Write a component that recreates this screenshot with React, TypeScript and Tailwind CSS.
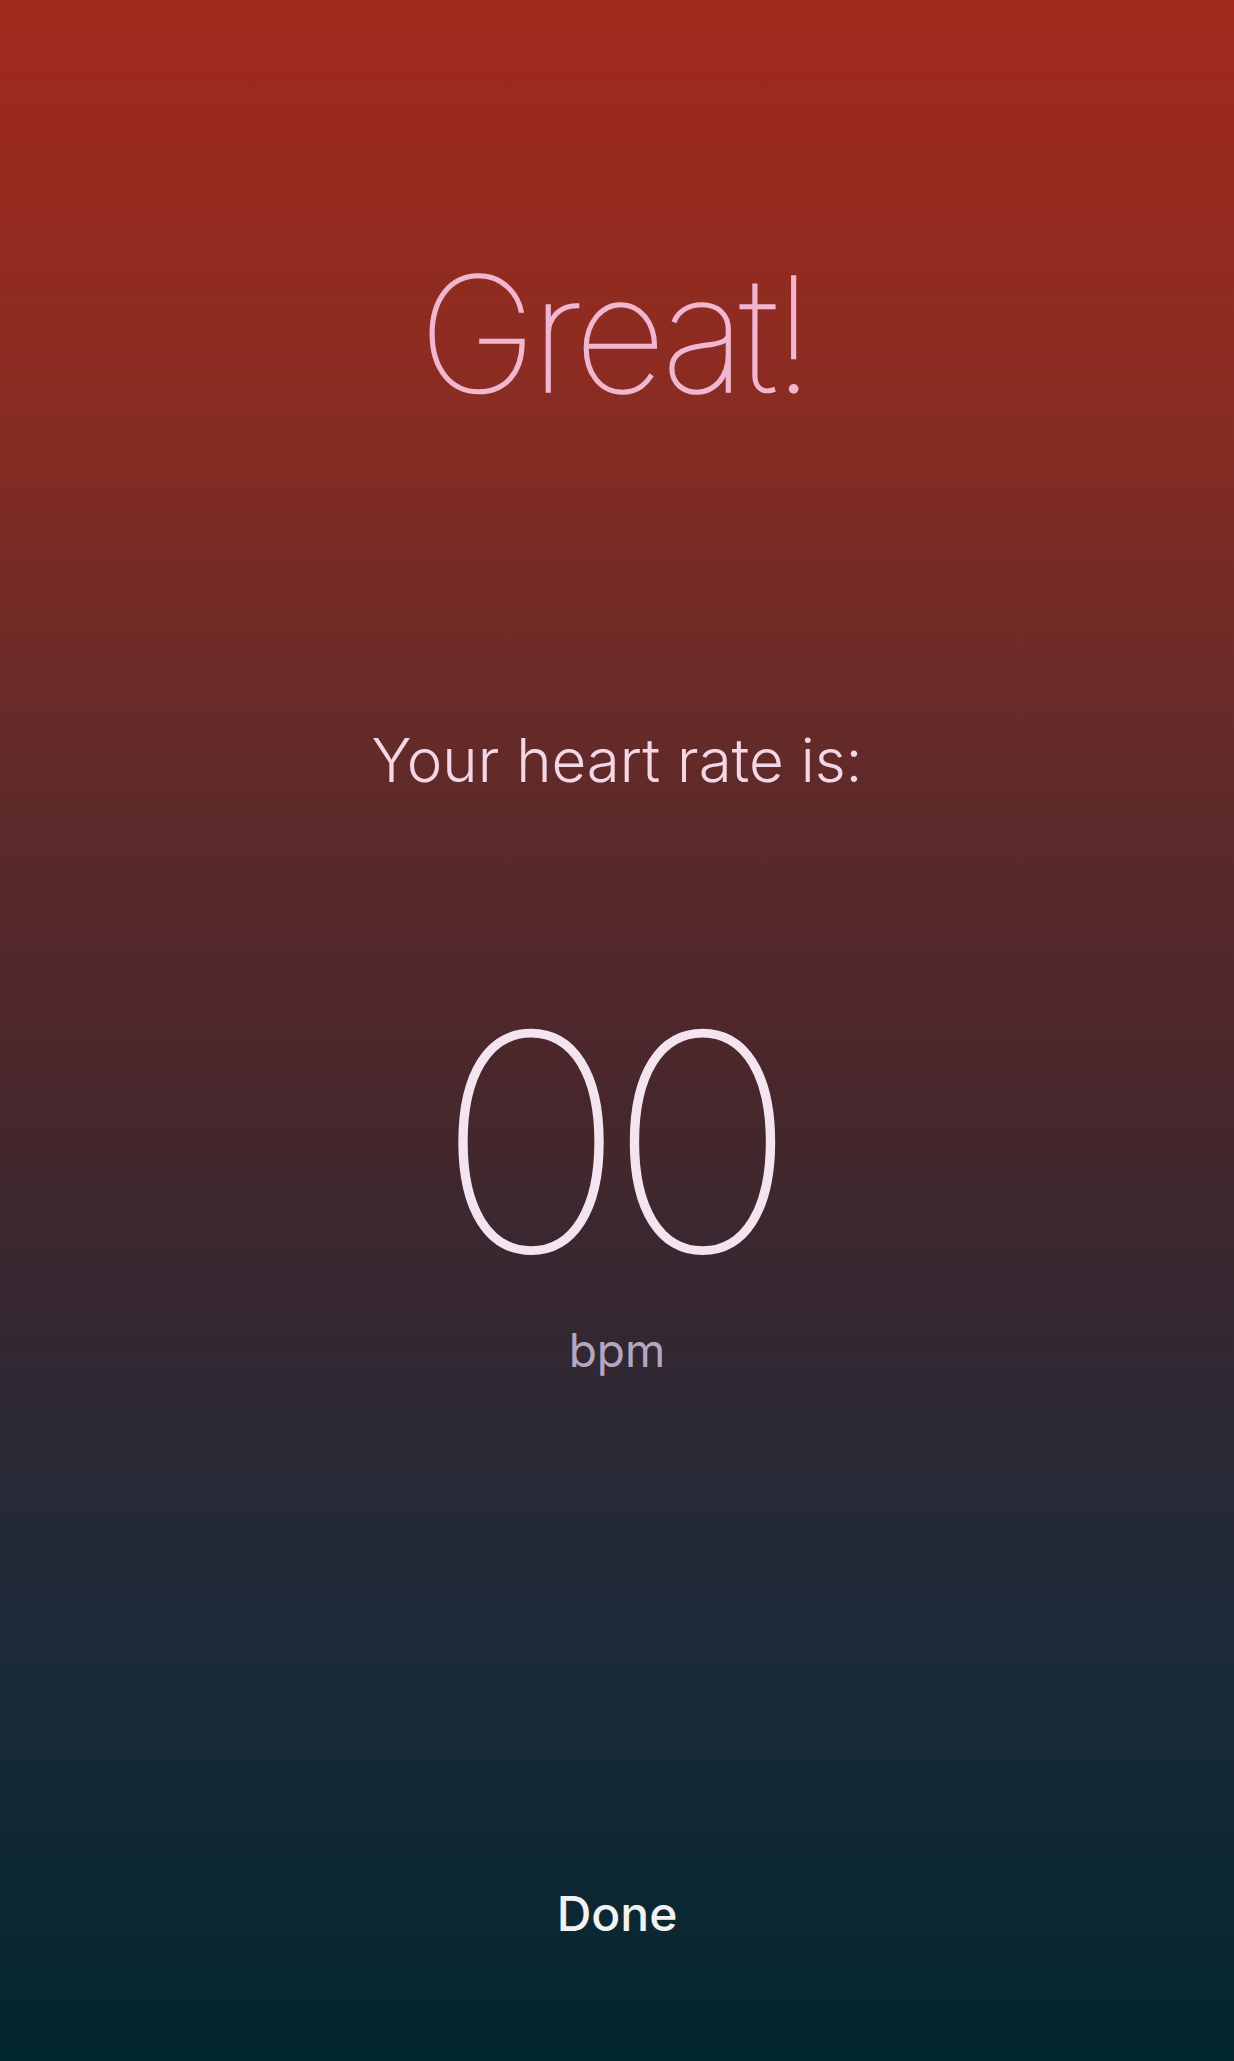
export default function App() {
  return (
    <div className="flex h-[2061px] w-full flex-col items-center bg-[linear-gradient(180deg,#a2291c_0%,#8a2c22_19%,#5e2a2a_39%,#48272c_53%,#2d2833_68%,#1c2a3a_80%,#02262f_100%)] font-['Inter','Liberation_Sans',sans-serif]">
      <h1 className="mt-[254px] pr-[6px] text-[160px] leading-none font-thin tracking-[-6px] text-[#f1b6d0] [-webkit-text-stroke:1.5px_#f1b6d0]">
        Great!
      </h1>
      <p className="mt-[316px] text-[60px] leading-none font-light text-[#f4d7e6]">
        Your heart rate is:
      </p>
      <div className="mt-[202px] scale-x-[1.07] pr-[17px] text-[300px] leading-none font-thin tracking-[-17px] text-[#f3e4f0] [-webkit-text-stroke:2px_#f3e4f0]">
        00
      </div>
      <div className="mt-[35px] text-[46px] leading-none font-normal text-[#b5a5c0]">
        bpm
      </div>
      <button className="mt-[517px] text-[48px] leading-none font-medium text-[#f2f2f2]">
        Done
      </button>
    </div>
  );
}
